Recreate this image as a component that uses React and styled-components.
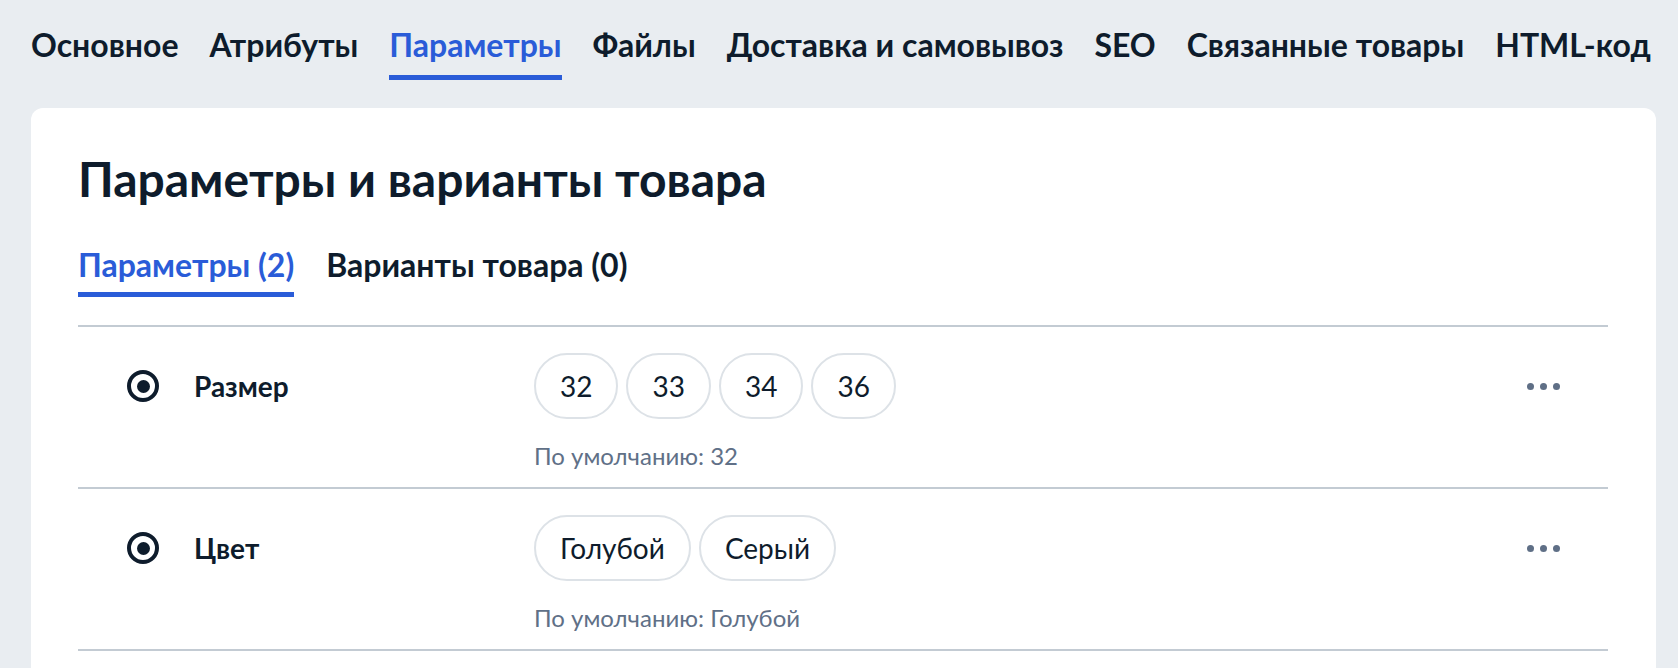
import styled, { createGlobalStyle } from "styled-components";

const GlobalStyle = createGlobalStyle`
  * { box-sizing: border-box; }
  body {
    margin: 0;
    background: #e9edf1;
    font-family: "Lato", "Noto Sans", sans-serif;
    color: #0e1c2c;
  }
`;

const navItems = [
  "Основное",
  "Атрибуты",
  "Параметры",
  "Файлы",
  "Доставка и самовывоз",
  "SEO",
  "Связанные товары",
  "HTML-код",
];

const params = [
  { name: "Размер", values: ["32", "33", "34", "36"], def: "32" },
  { name: "Цвет", values: ["Голубой", "Серый"], def: "Голубой" },
];

function App() {
  return (
    <>
      <GlobalStyle />
      <StPage>
        <StNav>
          {navItems.map((item) => (
            <StNavItem key={item} $active={item === "Параметры"}>
              {item}
            </StNavItem>
          ))}
        </StNav>
        <StCard>
          <StTitle>Параметры и варианты товара</StTitle>
          <StTabs>
            <StTab $active>Параметры (2)</StTab>
            <StTab>Варианты товара (0)</StTab>
          </StTabs>
          <StList>
            {params.map((p) => (
              <StRow key={p.name}>
                <StRowHead>
                  <StRadio />
                  <StLabel>{p.name}</StLabel>
                </StRowHead>
                <StValues>
                  <StChips>
                    {p.values.map((v) => (
                      <StChip key={v}>{v}</StChip>
                    ))}
                  </StChips>
                  <StDefault>По умолчанию: {p.def}</StDefault>
                </StValues>
                <StMore aria-label="Ещё">
                  <span />
                  <span />
                  <span />
                </StMore>
              </StRow>
            ))}
          </StList>
        </StCard>
      </StPage>
    </>
  );
}
export default App;

const StPage = styled.div`
  padding: 27px 22px 0 31px;
`;

const StNav = styled.nav`
  display: flex;
  gap: 31px;
  margin-bottom: 28px;
`;

const StNavItem = styled.div`
  font-size: 32px;
  font-weight: 700;
  line-height: 36px;
  white-space: nowrap;
  color: ${({ $active }) => ($active ? "#2a5cd8" : "#0e1c2c")};
  padding-bottom: 12px;
  border-bottom: 5px solid ${({ $active }) => ($active ? "#2a5cd8" : "transparent")};
`;

const StCard = styled.div`
  background: #ffffff;
  border-radius: 12px;
  padding: 43px 48px 0 47px;
  min-height: 600px;
`;

const StTitle = styled.h1`
  margin: 0;
  font-size: 48px;
  font-weight: 700;
  line-height: 56px;
  color: #0e1c2c;
`;

const StTabs = styled.div`
  display: flex;
  gap: 32px;
  margin-top: 40px;
  padding-bottom: 28px;
  border-bottom: 2px solid #c3cbd3;
`;

const StTab = styled.div`
  font-size: 32px;
  font-weight: 700;
  line-height: 36px;
  color: ${({ $active }) => ($active ? "#2a5cd8" : "#0e1c2c")};
  padding-bottom: 9px;
  border-bottom: 5px solid ${({ $active }) => ($active ? "#2a5cd8" : "transparent")};
`;

const StList = styled.div`
  display: flex;
  flex-direction: column;
`;

const StRow = styled.div`
  display: grid;
  grid-template-columns: 407px 1fr auto;
  align-items: start;
  padding: 26px 48px 16px 49px;
  border-bottom: 2px solid #c3cbd3;
`;

const StRowHead = styled.div`
  display: flex;
  align-items: center;
  gap: 35px;
  height: 66px;
`;

const StRadio = styled.span`
  width: 32px;
  height: 32px;
  border-radius: 50%;
  border: 4px solid #0e1c2c;
  display: flex;
  align-items: center;
  justify-content: center;
  flex-shrink: 0;
  &::after {
    content: "";
    width: 13px;
    height: 13px;
    border-radius: 50%;
    background: #0e1c2c;
  }
`;

const StLabel = styled.div`
  font-size: 28px;
  font-weight: 700;
  line-height: 34px;
`;

const StValues = styled.div`
  display: flex;
  flex-direction: column;
`;

const StChips = styled.div`
  display: flex;
  gap: 8px;
`;

const StChip = styled.div`
  height: 66px;
  padding: 0 24px;
  display: flex;
  align-items: center;
  border: 2px solid #dde2e7;
  border-radius: 33px;
  font-size: 28px;
  font-weight: 400;
  color: #0e1c2c;
`;

const StDefault = styled.div`
  margin-top: 22px;
  font-size: 24px;
  line-height: 30px;
  color: #607087;
`;

const StMore = styled.div`
  height: 66px;
  display: flex;
  align-items: center;
  gap: 6px;
  span {
    width: 7px;
    height: 7px;
    border-radius: 50%;
    background: #5f6f86;
  }
`;
